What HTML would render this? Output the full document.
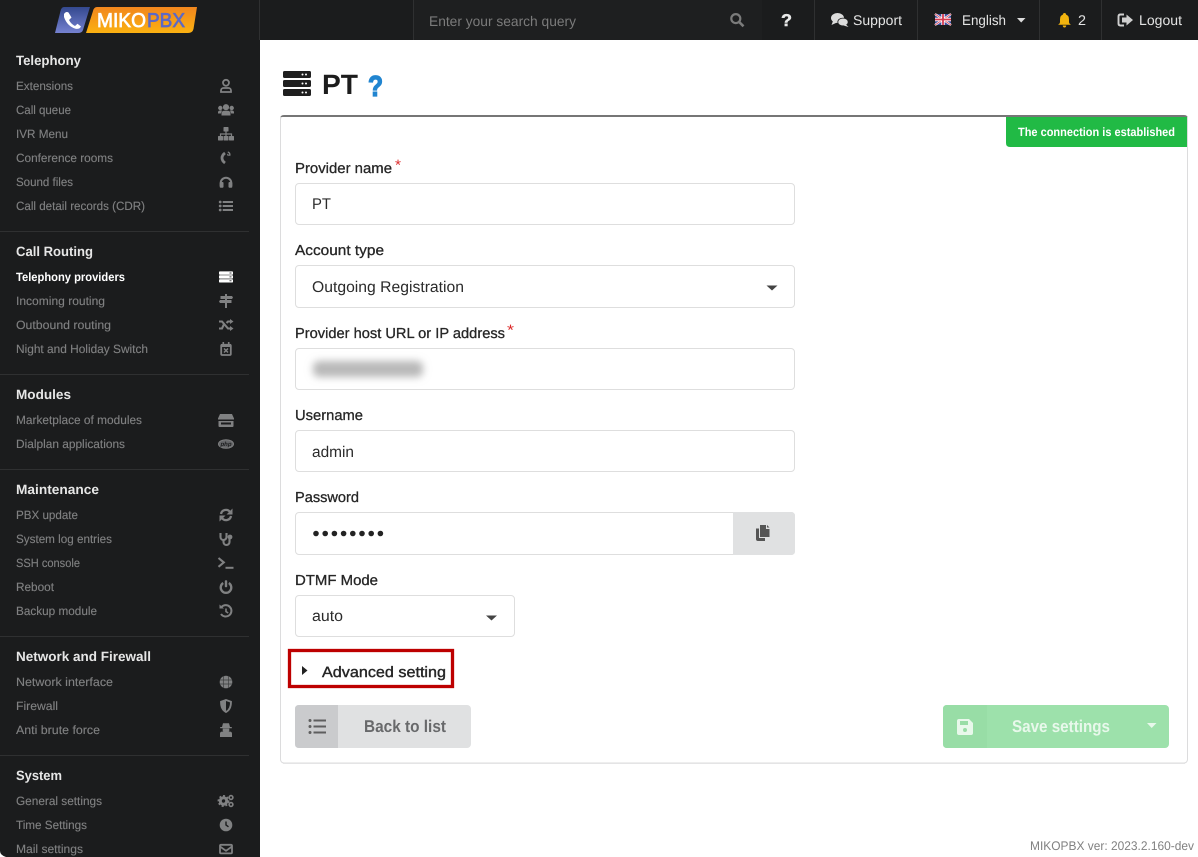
<!DOCTYPE html>
<html lang="en"><head><meta charset="utf-8"><title>MIKOPBX - PT</title>
<style>
html,body{margin:0;padding:0;background:#fff;width:1198px;height:857px;overflow:hidden}
svg{display:block}
text{font-family:"Liberation Sans",sans-serif}
.h{font-size:13.5px;font-weight:700;fill:#e6e6e6}
.i{font-size:12px;fill:#808182;stroke:#808182;stroke-width:.12}
.a{font-size:12px;font-weight:700;fill:#fff}
.t{font-size:14px;fill:#e4e4e4}
.l{font-size:14.5px;fill:#262626;stroke:#262626;stroke-width:.3}
.v{font-size:15.5px;fill:#2b2b2b}
.ic{fill:#808182;stroke:none}
.st{fill:none;stroke:#808182;stroke-width:1.8}
</style></head><body>
<svg width="1198" height="857" viewBox="0 0 1198 857" xmlns="http://www.w3.org/2000/svg" text-rendering="geometricPrecision">
<defs>
<linearGradient id="gb" x1="0" y1="0" x2="0" y2="1"><stop offset="0" stop-color="#34498f"/><stop offset="1" stop-color="#7581d0"/></linearGradient>
<linearGradient id="go" x1="0" y1="0" x2="0" y2="1"><stop offset="0" stop-color="#f1861e"/><stop offset="1" stop-color="#fbb111"/></linearGradient>
<filter id="bl" x="-20%" y="-80%" width="140%" height="260%"><feGaussianBlur stdDeviation="4"/></filter>
<g id="srv"><rect x="-7" y="-5.6" width="14" height="3.3" rx=".8"/><rect x="-7" y="-1.7" width="14" height="3.3" rx=".8"/><rect x="-7" y="2.2" width="14" height="3.3" rx=".8"/></g>
</defs>

<!-- sidebar and top bar -->
<rect width="260" height="857" fill="#1b1c1d"/>
<rect x="260" width="938" height="40" fill="#1b1c1d"/>
<rect x="413" width="349" height="40" fill="#1e1f20"/>
<g fill="#2f3031">
<rect x="259" width="1" height="40"/><rect x="413" width="1" height="40"/>
<rect x="814" width="1" height="40"/><rect x="917" width="1" height="40"/><rect x="1039" width="1" height="40"/><rect x="1101" width="1" height="40"/>
<rect y="231" width="249" height="1"/><rect y="374" width="249" height="1"/><rect y="469" width="249" height="1"/><rect y="636" width="249" height="1"/><rect y="755" width="249" height="1"/>
</g>

<!-- logo -->
<path d="M64 7H90L83 30Q82 33 78 33H55L60.500 11Q61.500 7 64 7Z" fill="url(#gb)"/>
<path d="M97 7H197L193.500 29Q192.500 33 188 33H86L93 11Q94 7 97 7Z" fill="url(#go)"/>
<path d="M64 14Q66 11 68.500 12.500L71.500 17.500L69 20Q71 24 75 26L77.500 23.800L81 26.500Q79.500 29.500 75.500 28.800Q67 26 64 17Z" fill="#fff"/>
<text x="97" y="27" font-size="20" fill="#fff" stroke="#fff" stroke-width=".7" textLength="49" lengthAdjust="spacingAndGlyphs">MIKO</text>
<text x="147" y="27" font-size="20" fill="#5c69c6" stroke="#5c69c6" stroke-width=".7" textLength="38" lengthAdjust="spacingAndGlyphs">PBX</text>

<!-- sidebar text -->
<g>
<text class="h" x="16" y="65" textLength="65" lengthAdjust="spacingAndGlyphs">Telephony</text>
<text class="i" x="16" y="90" textLength="57" lengthAdjust="spacingAndGlyphs">Extensions</text>
<text class="i" x="16" y="114" textLength="55" lengthAdjust="spacingAndGlyphs">Call queue</text>
<text class="i" x="16" y="138" textLength="52" lengthAdjust="spacingAndGlyphs">IVR Menu</text>
<text class="i" x="16" y="162" textLength="97" lengthAdjust="spacingAndGlyphs">Conference rooms</text>
<text class="i" x="16" y="186" textLength="57" lengthAdjust="spacingAndGlyphs">Sound files</text>
<text class="i" x="16" y="210" textLength="129" lengthAdjust="spacingAndGlyphs">Call detail records (CDR)</text>
<text class="h" x="16" y="256" textLength="77" lengthAdjust="spacingAndGlyphs">Call Routing</text>
<text class="a" x="16" y="281" textLength="109" lengthAdjust="spacingAndGlyphs">Telephony providers</text>
<text class="i" x="16" y="305" textLength="89" lengthAdjust="spacingAndGlyphs">Incoming routing</text>
<text class="i" x="16" y="329" textLength="95" lengthAdjust="spacingAndGlyphs">Outbound routing</text>
<text class="i" x="16" y="353" textLength="132" lengthAdjust="spacingAndGlyphs">Night and Holiday Switch</text>
<text class="h" x="16" y="399" textLength="55" lengthAdjust="spacingAndGlyphs">Modules</text>
<text class="i" x="16" y="424" textLength="126" lengthAdjust="spacingAndGlyphs">Marketplace of modules</text>
<text class="i" x="16" y="448" textLength="109" lengthAdjust="spacingAndGlyphs">Dialplan applications</text>
<text class="h" x="16" y="494" textLength="83" lengthAdjust="spacingAndGlyphs">Maintenance</text>
<text class="i" x="16" y="519" textLength="62" lengthAdjust="spacingAndGlyphs">PBX update</text>
<text class="i" x="16" y="543" textLength="96" lengthAdjust="spacingAndGlyphs">System log entries</text>
<text class="i" x="16" y="567" textLength="64" lengthAdjust="spacingAndGlyphs">SSH console</text>
<text class="i" x="16" y="591" textLength="38" lengthAdjust="spacingAndGlyphs">Reboot</text>
<text class="i" x="16" y="615" textLength="81" lengthAdjust="spacingAndGlyphs">Backup module</text>
<text class="h" x="16" y="661" textLength="135" lengthAdjust="spacingAndGlyphs">Network and Firewall</text>
<text class="i" x="16" y="686" textLength="97" lengthAdjust="spacingAndGlyphs">Network interface</text>
<text class="i" x="16" y="710" textLength="42" lengthAdjust="spacingAndGlyphs">Firewall</text>
<text class="i" x="16" y="734" textLength="84" lengthAdjust="spacingAndGlyphs">Anti brute force</text>
<text class="h" x="16" y="780" textLength="46" lengthAdjust="spacingAndGlyphs">System</text>
<text class="i" x="16" y="805" textLength="86" lengthAdjust="spacingAndGlyphs">General settings</text>
<text class="i" x="16" y="829" textLength="71" lengthAdjust="spacingAndGlyphs">Time Settings</text>
<text class="i" x="16" y="853" textLength="67" lengthAdjust="spacingAndGlyphs">Mail settings</text>
</g>

<!-- sidebar icons -->
<g transform="translate(226,86)"><circle class="st" cy="-3.200" r="3"/><path class="st" d="M-5 6V4.500A2.500 2.500 0 0 1-2.500 2H2.500A2.500 2.500 0 0 1 5 4.500V6Z"/></g>
<g transform="translate(226,110)" class="ic"><circle cy="-2.800" r="3.100"/><circle cx="-5.700" cy="-2" r="2.200"/><circle cx="5.700" cy="-2" r="2.200"/><path d="M-4.500 5.500V3A3 3 0 0 1-1.500 .8H1.500A3 3 0 0 1 4.500 3V5.500ZM-8 3.500V2A2 2 0 0 1-6 .5H-3.800L-5.200 3.500ZM8 3.500V2A2 2 0 0 0 6 .5H3.800L5.200 3.500Z"/></g>
<g transform="translate(226,134)" class="ic"><rect x="-2.500" y="-7" width="5" height="4.500" rx=".6"/><rect x="-8" y="2" width="5" height="4.500" rx=".6"/><rect x="-2.500" y="2" width="5" height="4.500" rx=".6"/><rect x="3" y="2" width="5" height="4.500" rx=".6"/><path d="M-.6-2.500H.6V-.6H6.100V2H4.900V.6H.6V2H-.6V.6H-4.900V2H-6.100V-.6H-.6Z"/></g>
<g transform="translate(226,158)"><path d="M-1 -5C-5 -2 -5 2 -1 5" fill="none" stroke="#808182" stroke-width="2.800"/><path d="M1.800 -6A2.700 2.700 0 0 1 3.600 -2.200M1.200 -3.600A1 1 0 0 1 2 -2.200" fill="none" stroke="#808182" stroke-width="1.400"/></g>
<g transform="translate(226,182)"><path d="M-5.300 4V1A5.300 5.300 0 0 1 5.300 1V4" fill="none" stroke="#808182" stroke-width="2"/><rect class="ic" x="-6.300" y="0" width="3.800" height="5.800" rx="1"/><rect class="ic" x="2.500" y="0" width="3.800" height="5.800" rx="1"/></g>
<g transform="translate(226,206)" class="ic"><circle cx="-5.800" cy="-4" r="1.400"/><circle cx="-5.800" cy="0" r="1.400"/><circle cx="-5.800" cy="4" r="1.400"/><rect x="-3.300" y="-5" width="10.300" height="2"/><rect x="-3.300" y="-1" width="10.300" height="2"/><rect x="-3.300" y="3" width="10.300" height="2"/></g>
<g transform="translate(226,277)" fill="#fff"><use href="#srv"/><g fill="#1b1c1d"><rect x="3.500" y="-4.400" width="2" height=".8"/><rect x="3.500" y="-.5" width="2" height=".8"/><rect x="3.500" y="3.400" width="2" height=".8"/></g></g>
<g transform="translate(226,301)" class="ic"><rect x="-1" y="-7" width="2" height="14"/><path d="M-5.500-5H6L7-3.500 6-2H-5.500ZM-6-1H5.500V2H-6L-7 .5Z"/></g>
<g transform="translate(226,325)"><path d="M-7-3.500H-4L2 3.500H4.500M-7 3.500H-4L-2-.8M.5-2L2-3.500H4.500" fill="none" stroke="#808182" stroke-width="2.100"/><path class="ic" d="M4-6L7.500-3.500 4-1ZM4 1L7.500 3.500 4 6Z"/></g>
<g transform="translate(226,349)"><rect class="st" x="-4.800" y="-4.200" width="9.600" height="10.200" rx="1"/><rect class="ic" x="-5" y="-5" width="10" height="3"/><rect class="ic" x="-3.500" y="-7" width="1.600" height="3"/><rect class="ic" x="1.900" y="-7" width="1.600" height="3"/><path d="M-2 -.5L2 3.500M2 -.5L-2 3.500" stroke="#808182" stroke-width="1.500"/></g>
<g transform="translate(226,420)" class="ic"><path d="M-6-6H6L8-1.500V-.5H-8V-1.500Z"/><path d="M-7.500 1H7.500V6A1 1 0 0 1 6.500 7H-6.500A1 1 0 0 1-7.500 6ZM-5 2.500V4.500H5V2.500Z" fill-rule="evenodd"/></g>
<g transform="translate(226,444)"><ellipse rx="7.500" ry="4.300" fill="#66676a" stroke="#808182"/><text x="0" y="2" text-anchor="middle" font-size="6" font-style="italic" font-weight="700" fill="#1b1c1d">php</text></g>
<g transform="translate(226,515)"><path d="M-5 -1A5 5 0 0 1 4 -3M5 1A5 5 0 0 1-4 3" fill="none" stroke="#808182" stroke-width="2.300"/><path class="ic" d="M6.500-6.500V-.5H.5ZM-6.500 6.500V.5H-.5Z"/></g>
<g transform="translate(226,539)"><path d="M-5.500-6V-2A3 3 0 0 0 .5-2V-6M-2.500 1V3A3 3 0 0 0 3.500 3V0" fill="none" stroke="#808182" stroke-width="2.100"/><circle class="ic" cx="4" cy="-2" r="2.400"/></g>
<g transform="translate(226,563)"><path d="M-7.500-5L-2.200-.6-7.500 3.800" fill="none" stroke="#808182" stroke-width="2.100"/><rect class="ic" x="-.5" y="3.800" width="8" height="2"/></g>
<g transform="translate(226,587)"><path d="M-2.800-4A5.300 5.300 0 1 0 2.800-4" fill="none" stroke="#808182" stroke-width="2.300"/><rect class="ic" x="-1.200" y="-6.800" width="2.400" height="7" rx=".8"/></g>
<g transform="translate(226,611)"><path d="M-4.500-4A5.700 5.700 0 1 1-5 3" fill="none" stroke="#808182" stroke-width="2"/><path class="ic" d="M-6.500-6.500L-2-2.500H-6.500Z"/><path d="M0-2.500V.6L2.200 2" fill="none" stroke="#808182" stroke-width="1.600"/></g>
<g transform="translate(226,682)"><circle class="ic" r="6.300"/><path d="M-6-2H6M-6 2H6M-2.200-6Q-3.200 0-2.200 6M2.200-6Q3.200 0 2.200 6" fill="none" stroke="#3d3e3f" stroke-width=".7"/></g>
<g transform="translate(226,706)"><path class="st" d="M0-6L5-4.200C5 1 3 4.600 0 6C-3 4.600-5 1-5-4.200Z"/><path class="ic" d="M0-6L-5-4.200C-5 1-3 4.600 0 6Z"/></g>
<g transform="translate(226,730)" class="ic"><path d="M-3-6.800H3L4-3H5.800V-1.800H-5.800V-3H-4Z"/><path d="M-3.300-1.500H3.300V.7A3.300 1.700 0 0 1-3.300 .7Z"/><path d="M-6 7V3.500A2 2 0 0 1-4 1.600H4A2 2 0 0 1 6 3.500V7Z"/></g>
<g transform="translate(226,801)"><circle cx="-2.500" cy="0" r="3.200" fill="none" stroke="#808182" stroke-width="3"/><circle cx="-2.500" cy="0" r="5.100" fill="none" stroke="#808182" stroke-width="1.700" stroke-dasharray="2 1.900"/><circle cx="5" cy="-3.500" r="1.900" fill="none" stroke="#808182" stroke-width="1.600"/><circle cx="5" cy="3.500" r="1.900" fill="none" stroke="#808182" stroke-width="1.600"/></g>
<g transform="translate(226,825)"><circle class="ic" r="6.300"/><path d="M0-3.500V0L2.500 1.800" fill="none" stroke="#1b1c1d" stroke-width="1.400"/></g>
<g transform="translate(226,849)"><rect class="st" x="-6" y="-4.200" width="12" height="8.600" rx="1"/><path class="st" d="M-6-2.500L0 1.800 6-2.500"/></g>

<!-- top bar content -->
<text x="429" y="26" font-size="14" fill="#7b7b7b" textLength="147" lengthAdjust="spacingAndGlyphs">Enter your search query</text>
<g transform="translate(737,20)"><circle cx="-1.200" cy="-1.400" r="4.500" fill="none" stroke="#7b7b7b" stroke-width="2.200"/><path d="M2.200 2L6.500 6.300" stroke="#7b7b7b" stroke-width="2.600"/></g>
<text x="781" y="26" font-size="17" font-weight="900" fill="#e8e8e8" stroke="#e8e8e8" stroke-width=".5" textLength="11" lengthAdjust="spacingAndGlyphs">?</text>
<g fill="#dcdcdc"><ellipse cx="837.500" cy="18" rx="6.500" ry="5"/><path d="M833 21L831.500 25 837 22.500Z"/><ellipse cx="843" cy="22" rx="5.200" ry="3.900" stroke="#1b1c1d" stroke-width=".8"/><path d="M846 24.500L848.500 27 843.500 25.500Z"/></g>
<text class="t" x="853" y="25" textLength="49" lengthAdjust="spacingAndGlyphs">Support</text>
<g><rect x="935" y="14" width="16" height="11" fill="#3a4a99"/><path d="M935 14L951 25M951 14L935 25" stroke="#fff" stroke-width="2.200"/><path d="M935 14L951 25M951 14L935 25" stroke="#d8485e" stroke-width=".8"/><path d="M943 14V25M935 19.500H951" stroke="#fff" stroke-width="3.400"/><path d="M943 14V25M935 19.500H951" stroke="#d63a50" stroke-width="1.800"/></g>
<text class="t" x="962" y="25" textLength="44" lengthAdjust="spacingAndGlyphs">English</text>
<path d="M1017 18H1025.500L1021.200 22.500Z" fill="#dcdcdc"/>
<path d="M1064.500 13Q1066 13 1066 14.500Q1069 15.500 1069 19.500V22Q1069 23.500 1071 24.800H1058Q1060 23.500 1060 22V19.500Q1060 15.500 1063 14.500Q1063 13 1064.500 13ZM1062.700 25.500H1066.300Q1066 27.500 1064.500 27.500Q1063 27.500 1062.700 25.500Z" fill="#f2b40f"/>
<text class="t" x="1078" y="25" textLength="8" lengthAdjust="spacingAndGlyphs">2</text>
<path d="M1124 14.500H1120.500Q1118.500 14.500 1118.500 16.500V23.500Q1118.500 25.500 1120.500 25.500H1124" fill="none" stroke="#cfcfcf" stroke-width="1.900"/><path d="M1122 17.500H1126.500V14.500L1133 20 1126.500 25.500V22.500H1122Z" fill="#cfcfcf"/>
<text class="t" x="1139" y="25" textLength="43" lengthAdjust="spacingAndGlyphs">Logout</text>

<!-- page title -->
<g fill="#1f1f1f"><rect x="283" y="71" width="28" height="7" rx="1.500"/><rect x="283" y="80" width="28" height="7" rx="1.500"/><rect x="283" y="89" width="28" height="7" rx="1.500"/></g>
<g fill="#fff"><rect x="301.500" y="73.500" width="2" height="2" rx="1"/><rect x="305" y="73.500" width="2" height="2" rx="1"/><rect x="301.500" y="82.500" width="2" height="2" rx="1"/><rect x="305" y="82.500" width="2" height="2" rx="1"/><rect x="301.500" y="91.500" width="2" height="2" rx="1"/><rect x="305" y="91.500" width="2" height="2" rx="1"/></g>
<text x="322" y="94" font-size="28" font-weight="700" fill="#1c1c1c" textLength="36" lengthAdjust="spacingAndGlyphs">PT</text>
<text x="368" y="96" font-size="29" font-weight="700" fill="#2185d0" stroke="#2185d0" stroke-width="1.300" textLength="15" lengthAdjust="spacingAndGlyphs">?</text>

<!-- card -->
<rect x="280.500" y="116" width="907" height="647" rx="3.500" fill="#fff" stroke="#dcdcdd"/>
<rect x="283" y="763" width="902" height="1" fill="#e4e4e5"/>
<path d="M280 119Q280 115 284 115H1184Q1188 115 1188 119V117H280Z" fill="#767676"/>
<path d="M1006 117H1187V147H1010Q1006 147 1006 143Z" fill="#21ba45"/>
<text x="1018" y="136" font-size="12" font-weight="700" fill="#fff" textLength="157" lengthAdjust="spacingAndGlyphs">The connection is established</text>

<!-- form labels -->
<text class="l" x="295" y="173" textLength="97" lengthAdjust="spacingAndGlyphs">Provider name</text>
<text x="395" y="170" font-size="15" fill="#db2828" textLength="6" lengthAdjust="spacingAndGlyphs">*</text>
<text class="l" x="295" y="255" textLength="89" lengthAdjust="spacingAndGlyphs">Account type</text>
<text class="l" x="295" y="338" textLength="210" lengthAdjust="spacingAndGlyphs">Provider host URL or IP address</text>
<text x="507" y="335" font-size="15" fill="#db2828" textLength="7" lengthAdjust="spacingAndGlyphs">*</text>
<text class="l" x="295" y="420" textLength="68" lengthAdjust="spacingAndGlyphs">Username</text>
<text class="l" x="295" y="502" textLength="64" lengthAdjust="spacingAndGlyphs">Password</text>
<text class="l" x="295" y="585" textLength="83" lengthAdjust="spacingAndGlyphs">DTMF Mode</text>

<!-- inputs -->
<g fill="#fff" stroke="#dedede">
<rect x="295.500" y="183.500" width="499" height="41" rx="3.500"/>
<rect x="295.500" y="265.500" width="499" height="42" rx="3.500"/>
<rect x="295.500" y="348.500" width="499" height="41" rx="3.500"/>
<rect x="295.500" y="430.500" width="499" height="41" rx="3.500"/>
<rect x="295.500" y="512.500" width="499" height="42" rx="3.500"/>
<rect x="295.500" y="595.500" width="219" height="41" rx="3.500"/>
</g>
<text class="v" x="312" y="209" textLength="19" lengthAdjust="spacingAndGlyphs">PT</text>
<text class="v" x="312" y="292" textLength="152" lengthAdjust="spacingAndGlyphs">Outgoing Registration</text>
<path d="M766.500 285.500H777.500L772 290.500Z" fill="#444"/>
<rect x="313" y="361" width="110" height="16" rx="6" fill="#b8b8b8" filter="url(#bl)"/>
<text class="v" x="312" y="457" textLength="42" lengthAdjust="spacingAndGlyphs">admin</text>
<g fill="#232323"><circle cx="316" cy="533.500" r="2.800"/><circle cx="325.200" cy="533.500" r="2.800"/><circle cx="334.400" cy="533.500" r="2.800"/><circle cx="343.600" cy="533.500" r="2.800"/><circle cx="352.800" cy="533.500" r="2.800"/><circle cx="362" cy="533.500" r="2.800"/><circle cx="371.200" cy="533.500" r="2.800"/><circle cx="380.400" cy="533.500" r="2.800"/></g>
<path d="M733 512H791Q795 512 795 516V551Q795 555 791 555H733Z" fill="#e0e1e2"/>
<path d="M760 525H766V529H769.500V537H760Z" fill="#555"/><path d="M767 525L769.500 527.500H767Z" fill="#555"/><path d="M756 528.500H759V538H765V541H758Q756 541 756 539Z" fill="#555"/>
<text class="v" x="312" y="621" textLength="31" lengthAdjust="spacingAndGlyphs">auto</text>
<path d="M486 615.500H497L491.500 620.500Z" fill="#444"/>

<!-- advanced -->
<rect x="289.500" y="650.500" width="163" height="36" fill="none" stroke="#bd0000" stroke-width="3.300"/>
<path d="M302 666V675L307.500 670.500Z" fill="#222"/>
<text x="322" y="677" font-size="15" fill="#262626" stroke="#262626" stroke-width=".4" textLength="124" lengthAdjust="spacingAndGlyphs">Advanced setting</text>

<!-- buttons -->
<rect x="295" y="705" width="176" height="43" rx="4" fill="#e0e1e2"/>
<path d="M299 705H338V748H299Q295 748 295 744V709Q295 705 299 705Z" fill="#cacbcd"/>
<g fill="#5e5e5e"><circle cx="310" cy="720.500" r="1.500"/><circle cx="310" cy="726.500" r="1.500"/><circle cx="310" cy="732.500" r="1.500"/><rect x="313.500" y="719.500" width="12.500" height="2"/><rect x="313.500" y="725.500" width="12.500" height="2"/><rect x="313.500" y="731.500" width="12.500" height="2"/></g>
<text x="364" y="732" font-size="17" font-weight="700" fill="#68696b" textLength="82" lengthAdjust="spacingAndGlyphs">Back to list</text>

<rect x="943" y="705" width="226" height="43" rx="4" fill="#9de1ab"/>
<path d="M947 705H987V748H947Q943 748 943 744V709Q943 705 947 705Z" fill="#98dda6"/>
<path d="M959 719H969L973 723V733Q973 735 971 735H959Q957 735 957 733V721Q957 719 959 719Z" fill="#e8f8eb"/><rect x="960" y="721" width="8" height="4" fill="#98dda6"/><circle cx="965" cy="730" r="2" fill="#98dda6"/>
<text x="1012" y="732" font-size="17" font-weight="700" fill="#e8f8eb" textLength="98" lengthAdjust="spacingAndGlyphs">Save settings</text>
<path d="M1147 723H1156.500L1151.700 728Z" fill="#e8f8eb"/>

<text x="1030" y="850" font-size="12.500" fill="#818181" textLength="164" lengthAdjust="spacingAndGlyphs">MIKOPBX ver: 2023.2.160-dev</text>
<path d="M0 857V851Q0 855 6 857Z" fill="#fff"/>
</svg>
</body></html>
